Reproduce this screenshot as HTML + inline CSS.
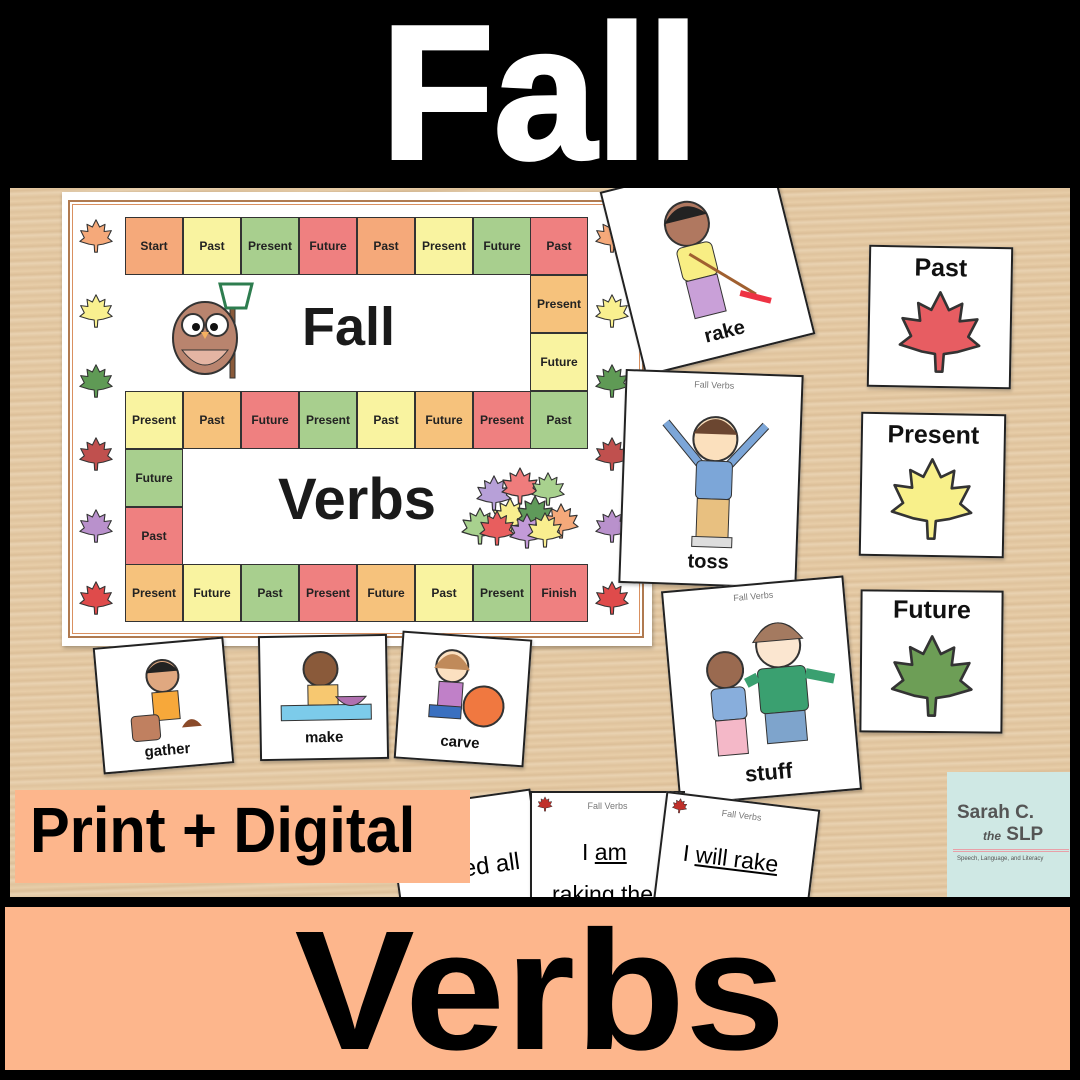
<!DOCTYPE html>
<html><head><meta charset="utf-8">
<style>
*{margin:0;padding:0;box-sizing:border-box}
html,body{width:1080px;height:1080px;overflow:hidden}
body{background:#000;position:relative;font-family:"Liberation Sans",sans-serif}
.abs{position:absolute}
.photo{left:10px;top:188px;width:1060px;height:709px;overflow:hidden;
background:repeating-linear-gradient(178deg,#e6cba6 0px,#dcbf98 3px,#e9d2b1 6px,#dfc39d 10px,#e8cea9 14px);}
.card{position:absolute;background:#fff;border:2px solid #222;box-shadow:1px 2px 3px rgba(0,0,0,.25)}
.sq{position:absolute;width:58px;height:58px;border:1.5px solid #333;font-weight:bold;font-size:12px;color:#222;display:flex;align-items:center;justify-content:center}
.o{background:#f5a97a}.lo{background:#f6c27c}.y{background:#f9f3a0}.g{background:#a8cf8e}.r{background:#ef8080}
.word{font-weight:bold;color:#111;position:absolute;text-align:center;width:100%}
.small{font-size:7px;color:#777;position:absolute}
</style></head><body>
<svg width="0" height="0" style="position:absolute"><defs>
<symbol id="leaf" viewBox="0 0 40 40"><path d="M20 2 L24 10 L30 7 L29 15 L37 14 L33 22 L38 26 L28 29 L22 30 L21.5 38 L18.5 38 L18 30 L12 29 L2 26 L7 22 L3 14 L11 15 L10 7 L16 10 Z" stroke="#333" stroke-width="1.2" stroke-linejoin="round"/></symbol>
</defs></svg>

<div class="abs" style="left:0;top:-27px;width:1080px;text-align:center;color:#fff;font-weight:bold;font-size:190px;line-height:240px;transform:scaleX(.97);-webkit-text-stroke:4px #fff">Fall</div>

<div class="photo abs">
 <div class="abs" style="left:52px;top:4px;width:590px;height:454px;background:#fff;box-shadow:1px 2px 4px rgba(0,0,0,.3)">
  <div class="abs" style="left:6px;top:8px;width:576px;height:438px;border:2px solid #b07a50;outline:1px solid #d99060;outline-offset:-5px"></div>
 </div>
 <div class="abs" style="left:0;top:0;width:700px;height:500px">
  <div class="sq o" style="left:115px;top:29px">Start</div>
  <div class="sq y" style="left:173px;top:29px">Past</div>
  <div class="sq g" style="left:231px;top:29px">Present</div>
  <div class="sq r" style="left:289px;top:29px">Future</div>
  <div class="sq o" style="left:347px;top:29px">Past</div>
  <div class="sq y" style="left:405px;top:29px">Present</div>
  <div class="sq g" style="left:463px;top:29px">Future</div>
  <div class="sq r" style="left:520px;top:29px">Past</div>
  <div class="sq lo" style="left:520px;top:87px">Present</div>
  <div class="sq y" style="left:520px;top:145px">Future</div>
  <div class="sq y" style="left:115px;top:203px">Present</div>
  <div class="sq lo" style="left:173px;top:203px">Past</div>
  <div class="sq r" style="left:231px;top:203px">Future</div>
  <div class="sq g" style="left:289px;top:203px">Present</div>
  <div class="sq y" style="left:347px;top:203px">Past</div>
  <div class="sq lo" style="left:405px;top:203px">Future</div>
  <div class="sq r" style="left:463px;top:203px">Present</div>
  <div class="sq g" style="left:520px;top:203px">Past</div>
  <div class="sq g" style="left:115px;top:261px">Future</div>
  <div class="sq r" style="left:115px;top:319px">Past</div>
  <div class="sq lo" style="left:115px;top:376px">Present</div>
  <div class="sq y" style="left:173px;top:376px">Future</div>
  <div class="sq g" style="left:231px;top:376px">Past</div>
  <div class="sq r" style="left:289px;top:376px">Present</div>
  <div class="sq lo" style="left:347px;top:376px">Future</div>
  <div class="sq y" style="left:405px;top:376px">Past</div>
  <div class="sq g" style="left:463px;top:376px">Present</div>
  <div class="sq r" style="left:520px;top:376px">Finish</div>
 </div>
 <div class="abs" style="left:292px;top:108px;font-weight:bold;font-size:54px;color:#1a1a1a">Fall</div>
 <div class="abs" style="left:268px;top:278px;font-weight:bold;font-size:58px;color:#1a1a1a">Verbs</div>
 <svg class="abs" style="left:150px;top:92px" width="110" height="100" viewBox="0 0 110 100">
  <rect x="70" y="20" width="5" height="78" fill="#8a5a3a" stroke="#333"/>
  <path d="M60 4 L92 4 L86 28 L66 28 Z" fill="#fff" stroke="#2e7d4f" stroke-width="3"/>
  <ellipse cx="45" cy="58" rx="32" ry="36" fill="#b9846e" stroke="#333" stroke-width="2"/>
  <path d="M22 70 Q45 100 68 70 Z" fill="#e4b5a3" stroke="#333"/>
  <circle cx="33" cy="45" r="11" fill="#fff" stroke="#333" stroke-width="2"/><circle cx="57" cy="45" r="11" fill="#fff" stroke="#333" stroke-width="2"/>
  <circle cx="36" cy="47" r="4" fill="#111"/><circle cx="54" cy="47" r="4" fill="#111"/>
  <path d="M41 52 L49 52 L45 59Z" fill="#f5b060"/>
 </svg>
 <svg class="abs" style="left:440px;top:278px" width="132" height="85" viewBox="0 0 132 85">
  <use href="#leaf" x="10" y="40" width="40" height="40" fill="#a8d18e"/>
  <use href="#leaf" x="25" y="8" width="38" height="38" fill="#b7a0d8"/>
  <use href="#leaf" x="50" y="0" width="40" height="40" fill="#ef7c7c"/>
  <use href="#leaf" x="80" y="5" width="36" height="36" fill="#a8d18e"/>
  <use href="#leaf" x="40" y="30" width="40" height="40" fill="#f9ee8f"/>
  <use href="#leaf" x="65" y="28" width="40" height="40" fill="#5f9a5a"/>
  <use href="#leaf" x="92" y="35" width="38" height="40" fill="#f5a97a"/>
  <use href="#leaf" x="28" y="42" width="38" height="40" fill="#e85e5e"/>
  <use href="#leaf" x="58" y="45" width="38" height="40" fill="#c39ad8"/>
  <use href="#leaf" x="76" y="44" width="38" height="40" fill="#f9ee8f"/>
 </svg>
 <svg class="abs" style="left:66px;top:30px" width="40" height="400">
  <use href="#leaf" x="2" y="0" width="36" height="36" fill="#f5a97a"/>
  <use href="#leaf" x="2" y="75" width="36" height="36" fill="#f9f08f"/>
  <use href="#leaf" x="2" y="145" width="36" height="36" fill="#5f9a55"/>
  <use href="#leaf" x="2" y="218" width="36" height="36" fill="#c0504e"/>
  <use href="#leaf" x="2" y="290" width="36" height="36" fill="#b991cc"/>
  <use href="#leaf" x="2" y="362" width="36" height="36" fill="#df4b4b"/>
 </svg>
 <svg class="abs" style="left:582px;top:30px" width="40" height="400">
  <use href="#leaf" x="2" y="0" width="36" height="36" fill="#f5a97a"/>
  <use href="#leaf" x="2" y="75" width="36" height="36" fill="#f9f08f"/>
  <use href="#leaf" x="2" y="145" width="36" height="36" fill="#5f9a55"/>
  <use href="#leaf" x="2" y="218" width="36" height="36" fill="#c0504e"/>
  <use href="#leaf" x="2" y="290" width="36" height="36" fill="#b991cc"/>
  <use href="#leaf" x="2" y="362" width="36" height="36" fill="#df4b4b"/>
 </svg>

 <div class="card" style="left:610px;top:-20px;width:175px;height:190px;transform:rotate(-14deg)">
  <svg class="abs" style="left:30px;top:20px" width="110" height="130" viewBox="0 0 110 130">
   <circle cx="45" cy="30" r="22" fill="#b07860" stroke="#333" stroke-width="2"/>
   <path d="M23 25 Q45 0 67 25 Z" fill="#222"/>
   <rect x="28" y="52" width="36" height="34" rx="6" fill="#f8ee84" stroke="#333"/>
   <rect x="30" y="86" width="32" height="38" fill="#c9a0d8" stroke="#333"/>
   <path d="M40 60 L95 115" stroke="#a06030" stroke-width="3"/>
   <path d="M80 110 L108 125" stroke="#e34" stroke-width="6"/>
  </svg>
  <div class="word" style="bottom:10px;font-size:20px">rake</div>
 </div>
 <div class="card" style="left:612px;top:184px;width:178px;height:214px;transform:rotate(2deg)">
  <div class="small" style="top:6px;width:100%;text-align:center;font-size:9px">Fall Verbs</div>
  <svg class="abs" style="left:30px;top:20px" width="120" height="160" viewBox="0 0 120 160">
   <path d="M10 30 L45 70 M110 30 L75 70" stroke="#333" stroke-width="9"/><path d="M10 30 L45 70 M110 30 L75 70" stroke="#7ca6d8" stroke-width="7"/>
   <circle cx="60" cy="45" r="22" fill="#fbe0bd" stroke="#333" stroke-width="2"/>
   <path d="M38 40 Q60 10 82 40 Z" fill="#6b4630"/>
   <rect x="42" y="67" width="36" height="38" rx="5" fill="#7ca6d8" stroke="#333"/>
   <rect x="44" y="105" width="32" height="40" fill="#e8c080" stroke="#333"/>
   <rect x="40" y="143" width="40" height="10" fill="#ddd" stroke="#333"/>
  </svg>
  <div class="word" style="bottom:10px;font-size:20px">toss</div>
 </div>
 <div class="card" style="left:660px;top:395px;width:183px;height:215px;transform:rotate(-5deg)">
  <div class="small" style="top:6px;width:100%;text-align:center;font-size:9px">Fall Verbs</div>
  <svg class="abs" style="left:15px;top:22px" width="150" height="160" viewBox="0 0 150 160">
   <circle cx="40" cy="60" r="18" fill="#9a6a50" stroke="#333" stroke-width="2"/>
   <rect x="24" y="78" width="34" height="32" rx="5" fill="#88aedc" stroke="#333"/>
   <rect x="26" y="110" width="30" height="35" fill="#f4b8c8" stroke="#333"/>
   <circle cx="95" cy="40" r="22" fill="#fbe6d0" stroke="#333" stroke-width="2"/>
   <path d="M70 35 Q95 0 120 35 Z" fill="#a47a60" stroke="#333"/>
   <rect x="72" y="62" width="48" height="45" rx="5" fill="#3aa070" stroke="#333"/>
   <path d="M60 75 L72 70 M120 70 L148 78" stroke="#3aa070" stroke-width="10"/>
   <rect x="76" y="107" width="40" height="30" fill="#7ea4cc" stroke="#333"/>
  </svg>
  <div class="word" style="bottom:10px;font-size:22px">stuff</div>
 </div>
 <div class="card" style="left:858px;top:58px;width:144px;height:142px;transform:rotate(1deg)">
  <div class="word" style="top:6px;font-size:25px">Past</div>
  <svg class="abs" style="left:26px;top:38px" width="88" height="92"><use href="#leaf" width="88" height="92" fill="#e75d62"/></svg>
 </div>
 <div class="card" style="left:850px;top:225px;width:145px;height:144px;transform:rotate(1deg)">
  <div class="word" style="top:6px;font-size:25px">Present</div>
  <svg class="abs" style="left:26px;top:38px" width="88" height="92"><use href="#leaf" width="88" height="92" fill="#f8f08a"/></svg>
 </div>
 <div class="card" style="left:850px;top:402px;width:143px;height:143px;transform:rotate(.5deg)">
  <div class="word" style="top:4px;font-size:25px">Future</div>
  <svg class="abs" style="left:26px;top:38px" width="88" height="92"><use href="#leaf" width="88" height="92" fill="#6d9e56"/></svg>
 </div>
 <div class="card" style="left:88px;top:454px;width:131px;height:127px;transform:rotate(-5deg)">
  <svg class="abs" style="left:25px;top:10px" width="80" height="90" viewBox="0 0 80 90">
   <circle cx="40" cy="22" r="16" fill="#e0a880" stroke="#333" stroke-width="2"/><path d="M24 18 Q40 -2 56 18Z" fill="#222"/>
   <rect x="28" y="38" width="26" height="28" fill="#f7a83a" stroke="#333"/>
   <rect x="5" y="60" width="28" height="25" rx="4" fill="#c08060" stroke="#333"/>
   <path d="M55 75 Q65 60 75 75Z" fill="#8a4a2a"/>
  </svg>
  <div class="word" style="bottom:8px;font-size:15px">gather</div>
 </div>
 <div class="card" style="left:249px;top:447px;width:129px;height:125px;transform:rotate(-1deg)">
  <svg class="abs" style="left:15px;top:10px" width="100" height="80" viewBox="0 0 100 80">
   <circle cx="45" cy="22" r="17" fill="#8a5a3a" stroke="#333" stroke-width="2"/>
   <rect x="32" y="38" width="30" height="20" fill="#f7c870" stroke="#333"/>
   <rect x="5" y="58" width="90" height="15" fill="#7ccbea" stroke="#333"/>
   <path d="M60 50 Q75 68 90 50Z" fill="#b070b0" stroke="#333"/>
  </svg>
  <div class="word" style="bottom:12px;font-size:15px">make</div>
 </div>
 <div class="card" style="left:388px;top:447px;width:130px;height:128px;transform:rotate(4deg)">
  <svg class="abs" style="left:20px;top:8px" width="90" height="85" viewBox="0 0 90 85">
   <circle cx="30" cy="22" r="16" fill="#fbe0c0" stroke="#333" stroke-width="2"/><path d="M12 25 Q30 -5 48 25Z" fill="#c08a5a"/>
   <rect x="18" y="38" width="24" height="26" fill="#c080c8" stroke="#333"/>
   <rect x="10" y="62" width="32" height="12" fill="#3a70c0" stroke="#333"/>
   <circle cx="64" cy="60" r="20" fill="#f07840" stroke="#333" stroke-width="2"/>
  </svg>
  <div class="word" style="bottom:10px;font-size:15px">carve</div>
 </div>
 <div class="card" style="left:385px;top:610px;width:145px;height:130px;transform:rotate(-8deg)">
  <div class="abs" style="left:65px;top:55px;font-size:24px">ed all</div>
 </div>
 <div class="card" style="left:520px;top:603px;width:155px;height:130px">
  <div class="small" style="top:8px;width:100%;text-align:center;font-size:9px">Fall Verbs</div>
  <svg class="abs" style="left:5px;top:3px" width="16" height="16"><use href="#leaf" width="16" height="16" fill="#c0302a"/></svg>
  <div class="abs" style="left:50px;top:46px;font-size:23px">I <u>am</u></div>
  <div class="abs" style="left:20px;top:88px;font-size:23px">raking the</div>
 </div>
 <div class="card" style="left:648px;top:612px;width:155px;height:130px;transform:rotate(7deg)">
  <div class="small" style="top:8px;width:100%;text-align:center;font-size:9px">Fall Verbs</div>
  <svg class="abs" style="left:5px;top:3px" width="16" height="16"><use href="#leaf" width="16" height="16" fill="#c0302a"/></svg>
  <div class="abs" style="left:22px;top:44px;font-size:23px">I <u>will rake</u></div>
 </div>
 <div class="abs" style="left:5px;top:602px;width:455px;height:93px;background:#fdb68c"></div>
 <div class="abs" style="left:20px;top:605px;font-weight:bold;font-size:64px;color:#000;white-space:nowrap;transform:scaleX(.93);transform-origin:left">Print + Digital</div>
 <div class="abs" style="left:937px;top:584px;width:123px;height:125px;background:#cfe8e4">
  <div class="abs" style="left:10px;top:30px;font-weight:bold;font-size:19px;color:#555">Sarah C.</div>
  <div class="abs" style="left:36px;top:52px;font-weight:bold;font-size:19px;color:#555"><i style="font-size:12px">the</i> SLP</div>
  <div class="abs" style="left:6px;top:77px;width:116px;height:3px;border-top:1px solid #e8a0a8;border-bottom:1px solid #e8a0a8"></div>
  <div class="abs" style="left:10px;top:84px;font-size:6px;color:#555">Speech, Language, and Literacy</div>
 </div>
</div>

<div class="abs" style="left:5px;top:907px;width:1065px;height:163px;background:#fdb68c;overflow:hidden">
 <div class="abs" style="left:-5px;top:-16px;width:1080px;text-align:center;color:#000;font-weight:bold;font-size:170px;line-height:200px;transform:scaleX(1.06)">Verbs</div>
</div>
</body></html>
